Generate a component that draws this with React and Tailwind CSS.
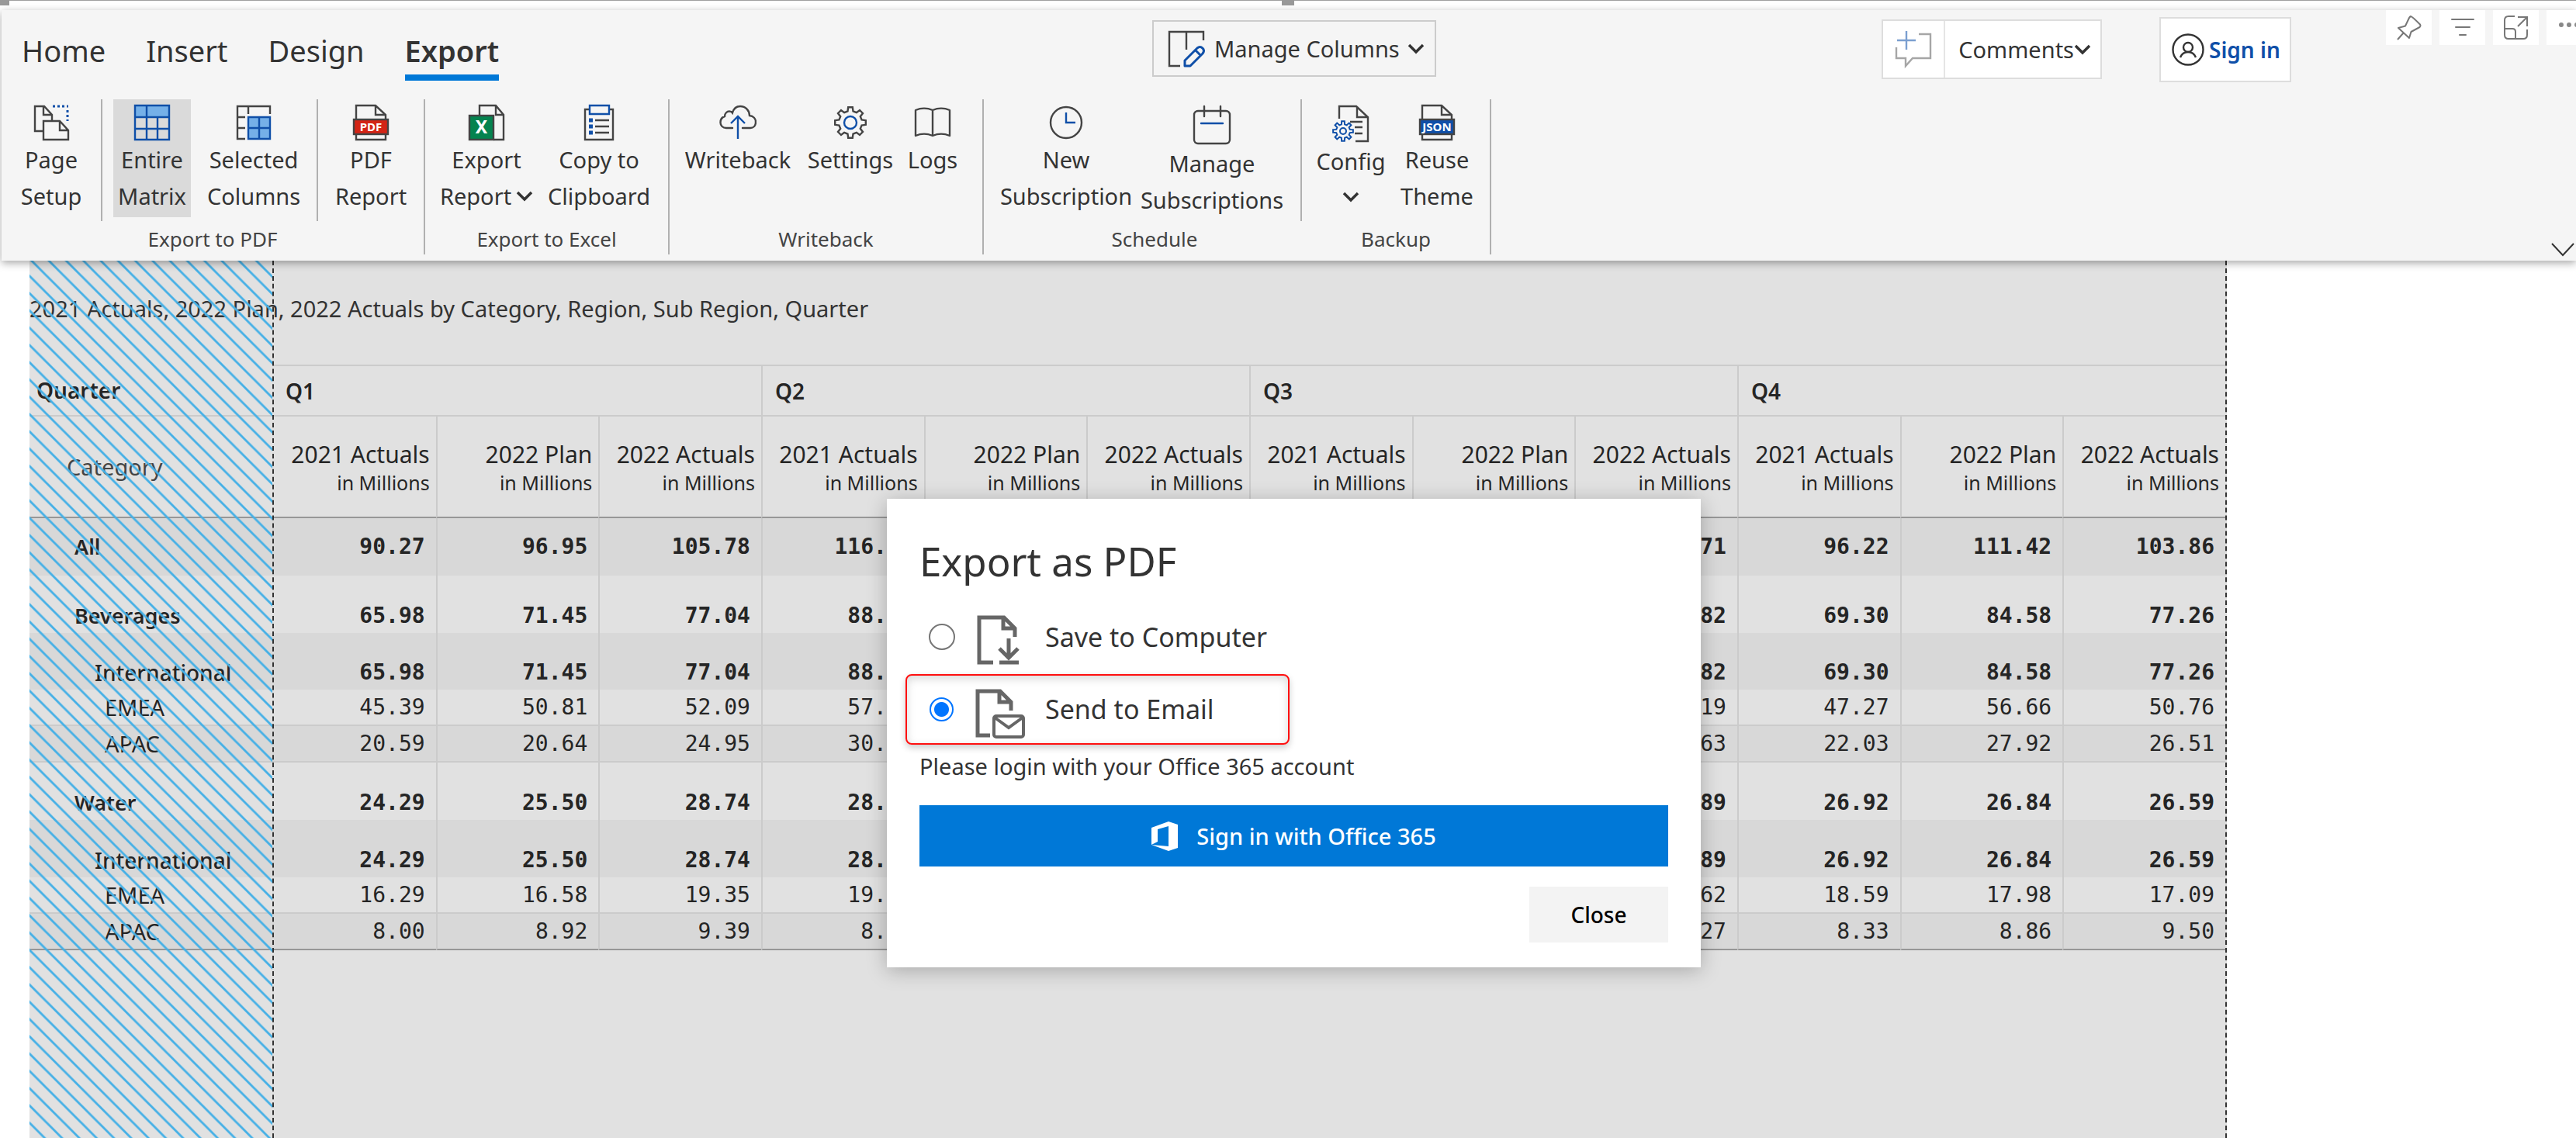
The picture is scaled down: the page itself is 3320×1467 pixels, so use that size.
import React from "react";

const INK = "#444444";
const BLUE = "#0f4fa8";
const SKY = "#75b0e8";

function gearPath(cx, cy, outer, inner, teeth) {
  const step = (Math.PI * 2) / teeth;
  const pts = [];
  for (let i = 0; i < teeth; i++) {
    const a = i * step - Math.PI / 2;
    [
      [inner, -0.3],
      [outer, -0.18],
      [outer, 0.18],
      [inner, 0.3],
    ].forEach(([r, k]) => {
      const t = a + k * step;
      pts.push((cx + r * Math.cos(t)).toFixed(2) + " " + (cy + r * Math.sin(t)).toFixed(2));
    });
  }
  return "M" + pts.join("L") + "Z";
}

function Svg({ w = 48, h = 48, children, className = "" }) {
  return (
    <svg
      width={w}
      height={h}
      viewBox={"0 0 " + w + " " + h}
      fill="none"
      stroke={INK}
      strokeWidth="2.4"
      className={"shrink-0 " + className}
      aria-hidden="true"
    >
      {children}
    </svg>
  );
}

const PageSetupIcon = () => (
  <Svg>
    <path d="M14 35H3V3H15L25 14V22M14 3V14H25" />
    <path d="M14 22V46H46V34L35 22ZM35 22V34H46" />
    <path d="M26 3H46" stroke={BLUE} strokeWidth="3" strokeDasharray="3 3" />
    <path d="M45 8V22" stroke={BLUE} strokeWidth="3" strokeDasharray="3 3" />
  </Svg>
);
const MatrixIcon = () => (
  <Svg>
    <path d="M2 2H46V17H2Z" fill={SKY} stroke="none" />
    <path d="M2 2H46V46H2ZM2 17H46M2 32H46M17 2V46M31 17V46" stroke={BLUE} />
  </Svg>
);
const SelectedIcon = () => (
  <Svg>
    <path d="M13 45H3V3H45V13M17 3V13M3 17H13M3 31H13" />
    <path d="M17 17H45V45H17ZM17 31H45M31 17V45" stroke={BLUE} fill={SKY} />
  </Svg>
);
function FileBadge({ label, fill, size }) {
  return (
    <Svg>
      <path d="M5 20V2H30L43 14V20M30 2V14H43M5 39V46H43V39" />
      <rect x="2" y="20" width="44" height="19" fill={fill} />
      <text
        x="24"
        y="35"
        textAnchor="middle"
        fontSize={size}
        fontWeight="700"
        fontFamily="Noto Sans, sans-serif"
        fill="#fff"
        stroke="none"
      >
        {label}
      </text>
    </Svg>
  );
}
const ExcelIcon = () => (
  <Svg>
    <path d="M15 14V2H36L46 14V46H33M36 2V14H46" />
    <rect x="2" y="15" width="31" height="31" fill="#04834f" />
    <text
      x="17.500"
      y="38"
      textAnchor="middle"
      fontSize="23"
      fontWeight="700"
      fontFamily="Noto Sans, sans-serif"
      fill="#fff"
      stroke="none"
    >
      X
    </text>
  </Svg>
);
const ClipboardIcon = () => (
  <Svg>
    <path d="M12 7H6V46H42V7H37" />
    <path d="M12 2H37V13H12Z" stroke={BLUE} />
    <path d="M11 21H16M11 29H16M11 37H16" stroke={BLUE} strokeWidth="5" />
    <path d="M19 21H37M19 29H37M19 37H37" />
  </Svg>
);
const CloudIcon = () => (
  <Svg>
    <path
      strokeLinecap="round"
      d="M17 31H9C4.500 31 1.500 28 1.500 24C1.500 20 4 17 7 16C7 12 10 9.500 13 9.500C14.500 9.500 16 10 17 11.500C18.500 6 22.500 3 27 3C34 3 39 8.500 39 15C44 15.500 47 19 47 23.500S44 31 40 31H30"
    />
    <path d="M24 45V16M15 25L24 16L33 25" stroke={BLUE} />
  </Svg>
);
const GearIcon = () => (
  <Svg>
    <path d={gearPath(24, 24, 20, 15, 8)} />
    <circle cx="24" cy="24" r="8" stroke={BLUE} />
  </Svg>
);
const BookIcon = () => (
  <Svg>
    <path
      strokeLinejoin="round"
      d="M2 8C9 5 17 5 24 8C31 5 39 5 46 8V41C39 38 31 38 24 41C17 38 9 38 2 41ZM24 8V41"
    />
  </Svg>
);
const ClockIcon = () => (
  <Svg>
    <circle cx="24" cy="24" r="20" />
    <path d="M24 11V24H36" stroke={BLUE} />
  </Svg>
);
const CalendarIcon = () => (
  <Svg w={50} h={53}>
    <rect x="2" y="9" width="46" height="42" rx="5" />
    <path d="M15 3V16M36 3V16" strokeLinecap="round" />
    <path d="M11 25H39" stroke={BLUE} strokeLinecap="round" />
  </Svg>
);
const ConfigIcon = () => (
  <Svg h={50}>
    <path d="M9 19V3H31L46 17V48H30M32 3V17H46M23 23H39M29 30H39M29 38H39" />
    <path d={gearPath(14, 35, 13, 9, 8)} stroke={BLUE} strokeWidth="2" />
    <circle cx="14" cy="35" r="4" stroke={BLUE} strokeWidth="2" />
  </Svg>
);
const ManageColumnsIcon = () => (
  <Svg>
    <path d="M16 46H2V2H46V13M24 2V25" />
    <path
      d="M22 46V39L38 23C43 19 49 25 45 30L29 46ZM36 26L42 32"
      stroke={BLUE}
      strokeWidth="3"
      strokeLinejoin="round"
    />
  </Svg>
);
const AddCommentIcon = () => (
  <Svg h={50}>
    <path d="M31 5H46V36H23L14 46V36H2V22" stroke="#a6a6a6" />
    <path d="M15 1V25M3 13H27" stroke="#7b9fd0" />
  </Svg>
);
const UserIcon = () => (
  <Svg w={42} h={42}>
    <circle cx="21" cy="21" r="19.500" stroke="#333" />
    <circle cx="21" cy="18" r="6" stroke="#333" />
    <path d="M11 31C13 26 17 24 21 24S29 26 31 31" stroke="#333" />
  </Svg>
);
const Chevron = ({ className = "" }) => (
  <svg width="22" height="14" viewBox="0 0 22 14" fill="none" stroke="#333" strokeWidth="3.500" className={"shrink-0 " + className} aria-hidden="true">
    <path d="M2 2L11 11L20 2" />
  </svg>
);

function Tool({ icon, lines, className, chevron }) {
  return (
    <button type="button" className={"flex h-[152px] shrink-0 flex-col items-center pt-1.5 " + className}>
      {icon}
      <span className="flex flex-col items-center">
        {lines.map((line, i) => (
          <span key={line} className="flex h-[47px] items-center whitespace-nowrap">
            {line}
            {chevron === "inline" && i === lines.length - 1 ? <Chevron className="ml-1.5" /> : null}
          </span>
        ))}
      </span>
      {chevron === "below" ? <Chevron className="mt-4" /> : null}
    </button>
  );
}

const Split = () => <div className="h-[157px] w-0.5 shrink-0 bg-[#b0b0b0]" />;

function Group({ label, children, end = true, className = "", labelClass = "" }) {
  return (
    <section className={"flex h-[200px] flex-col " + (end ? "border-r-2 border-[#b0b0b0] " : "") + className} aria-label={label}>
      <div className="flex h-[157px] shrink-0 items-start">{children}</div>
      <div className={"h-[43px] text-center text-[26px] leading-[46px] text-[#444] " + labelClass}>{label}</div>
    </section>
  );
}

function IconButton({ label, children, className = "w-[59px] justify-center" }) {
  return (
    <button type="button" aria-label={label} className={"flex h-[45px] shrink-0 items-center bg-white " + className}>
      {children}
    </button>
  );
}

function Ribbon() {
  return (
    <header className="relative z-20 ml-0.5 mt-3 flex flex-col bg-[#f5f5f5] text-[#333] shadow-[0_3px_10px_rgba(0,0,0,0.35)]">
      <div className="flex h-[115px] items-start">
        <nav className="flex flex-1 gap-[52px] pl-[26px] pt-[26px] text-[38px] leading-[52px]">
          {["Home", "Insert", "Design"].map((t) => (
            <a key={t} href="#" className="h-[65px]">
              {t}
            </a>
          ))}
          <a href="#" className="h-[65px] border-b-8 border-[#0078d7] font-semibold">
            Export
          </a>
        </nav>
        <button type="button" className="mr-3 mt-[13px] flex h-[73px] w-[366px] items-center border-2 border-[#ccc] pl-[18px] text-[29px]">
          <ManageColumnsIcon />
          <span className="ml-3 mr-2.5 whitespace-nowrap">Manage Columns</span>
          <Chevron />
        </button>
        <div className="flex flex-1 items-start justify-end text-[29px]">
          <div className="mr-[74px] mt-3 flex h-[77px] w-[284px] border-2 border-[#ddd] bg-white">
            <button type="button" aria-label="Add comment" className="flex w-[80px] items-center justify-center border-r-2 border-[#e5e5e5]">
              <AddCommentIcon />
            </button>
            <button type="button" className="flex flex-1 items-center justify-end pr-3">
              Comments
              <Chevron />
            </button>
          </div>
          <button
            type="button"
            className="mr-[122px] mt-[9px] flex h-[84px] w-[170px] items-center border-2 border-[#ddd] bg-white pl-3.5 font-semibold text-[#0f4fa8]"
          >
            <UserIcon />
            <span className="ml-1.5 whitespace-nowrap text-[28px]">Sign in</span>
          </button>
          <div className="flex w-[245px] shrink-0 gap-2.5 overflow-hidden">
            <IconButton label="Pin visual">
              <svg width="32" height="32" viewBox="0 0 32 32" fill="none" stroke="#777" strokeWidth="2" strokeLinejoin="round">
                <path d="M1 31L9 22M18 1C19 1 20 1.500 30 11.500C31 13 30.500 14 29.500 15L18.500 21L16 29L2 16L11 13.500L16 3C16.500 2 17 1.500 18 1Z" />
              </svg>
            </IconButton>
            <IconButton label="Filters">
              <svg width="30" height="32" viewBox="0 0 30 32" stroke="#777" strokeWidth="2" strokeLinecap="round">
                <path d="M1 5H29M6 15H24M11 25H19" />
              </svg>
            </IconButton>
            <IconButton label="Focus mode">
              <svg width="31" height="31" viewBox="0 0 31 31" fill="none" stroke="#777" strokeWidth="2">
                <path d="M14 1H6C3 1 1 3 1 6V25C1 28 3 30 6 30H25C28 30 30 28 30 25V18M18 2H30V14M30 2L18 14M1 17H11C13 17 15 18 15 21V30" />
              </svg>
            </IconButton>
            <IconButton label="More options" className="w-[59px] pl-4 pb-2">
              <svg width="28" height="6" viewBox="0 0 28 6" fill="#888">
                <circle cx="3" cy="3" r="3" />
                <circle cx="13" cy="3" r="3" />
                <circle cx="23" cy="3" r="3" />
              </svg>
            </IconButton>
          </div>
        </div>
      </div>

      <div className="flex h-[208px] items-start text-[29px]">
        <Group label="Export to PDF">
          <Tool className="w-[128px]" icon={<PageSetupIcon />} lines={["Page", "Setup"]} />
          <Split />
          <Tool className="ml-3.5 w-[100px] bg-[#dadada]" icon={<MatrixIcon />} lines={["Entire", "Matrix"]} />
          <Tool className="w-[162px]" icon={<SelectedIcon />} lines={["Selected", "Columns"]} />
          <Split />
          <Tool className="w-[136px]" icon={<FileBadge label="PDF" fill="#d32415" size="15" />} lines={["PDF", "Report"]} />
        </Group>
        <Group label="Export to Excel" className="w-[315px]">
          <Tool className="w-[158px]" icon={<ExcelIcon />} lines={["Export", "Report"]} chevron="inline" />
          <Tool className="w-[132px]" icon={<ClipboardIcon />} lines={["Copy to", "Clipboard"]} />
        </Group>
        <Group label="Writeback" className="w-[405px]">
          <Tool className="w-[176px]" icon={<CloudIcon />} lines={["Writeback"]} />
          <Tool className="w-[114px]" icon={<GearIcon />} lines={["Settings"]} />
          <Tool className="w-[98px]" icon={<BookIcon />} lines={["Logs"]} />
        </Group>
        <Group label="Schedule" end={false} className="px-4" labelClass="pl-8">
          <Tool className="w-[180px]" icon={<ClockIcon />} lines={["New", "Subscription"]} />
          <Tool className="w-[196px]" icon={<CalendarIcon />} lines={["Manage", "Subscriptions"]} />
        </Group>
        <Split />
        <Group label="Backup" className="w-[244px]">
          <Tool className="w-[126px]" icon={<ConfigIcon />} lines={["Config"]} chevron="below" />
          <Tool className="w-[96px]" icon={<FileBadge label="JSON" fill={BLUE} size="15" />} lines={["Reuse", "Theme"]} />
        </Group>
        <button type="button" aria-label="Collapse ribbon" className="ml-auto mr-0.5 mt-[185px]">
          <svg width="30" height="18" viewBox="0 0 30 18" fill="none" stroke="#333" strokeWidth="2" aria-hidden="true">
            <path d="M1 1L15 16L29 1" />
          </svg>
        </button>
      </div>
    </header>
  );
}

const QUARTERS = ["Q1", "Q2", "Q3", "Q4"];
const MEASURES = ["2021 Actuals", "2022 Plan", "2022 Actuals"];

/* Columns fully covered by the dialog carry no value. */
const ROWS = [
  { name: "All", pad: "pl-[58px]", tone: "bold", h: "h-[74px]", align: "align-middle", dark: true,
    v: ["90.27", "96.95", "105.78", "116.42", "", "", "", "", "101.71", "96.22", "111.42", "103.86"] },
  { name: "Beverages", pad: "pl-[58px]", tone: "bold", h: "h-[74px]", align: "align-bottom",
    v: ["65.98", "71.45", "77.04", "88.10", "", "", "", "", "74.82", "69.30", "84.58", "77.26"] },
  { name: "International", pad: "pl-[84px]", tone: "medium", h: "h-[73px]", align: "align-bottom", dark: true,
    v: ["65.98", "71.45", "77.04", "88.10", "", "", "", "", "74.82", "69.30", "84.58", "77.26"] },
  { name: "EMEA", pad: "pl-[97px]", h: "h-[47px]", align: "align-bottom", line: "thin",
    v: ["45.39", "50.81", "52.09", "57.80", "", "", "", "", "48.19", "47.27", "56.66", "50.76"] },
  { name: "APAC", pad: "pl-[97px]", h: "h-[47px]", align: "align-bottom", dark: true, line: "thin",
    v: ["20.59", "20.64", "24.95", "30.30", "", "", "", "", "26.63", "22.03", "27.92", "26.51"] },
  { name: "Water", pad: "pl-[58px]", tone: "bold", h: "h-[74px]", align: "align-bottom",
    v: ["24.29", "25.50", "28.74", "28.32", "", "", "", "", "26.89", "26.92", "26.84", "26.59"] },
  { name: "International", pad: "pl-[84px]", tone: "medium", h: "h-[74px]", align: "align-bottom", dark: true,
    v: ["24.29", "25.50", "28.74", "28.32", "", "", "", "", "26.89", "26.92", "26.84", "26.59"] },
  { name: "EMEA", pad: "pl-[97px]", h: "h-[47px]", align: "align-bottom", line: "thin",
    v: ["16.29", "16.58", "19.35", "19.40", "", "", "", "", "17.62", "18.59", "17.98", "17.09"] },
  { name: "APAC", pad: "pl-[97px]", h: "h-[47px]", align: "align-bottom", dark: true, line: "thick",
    v: ["8.00", "8.92", "9.39", "8.92", "", "", "", "", "9.27", "8.33", "8.86", "9.50"] },
];

const LINE = {
  thin: "border-b-2 border-b-[#cbcbcb]",
  thick: "border-b-2 border-b-[#979797]",
};

const LABEL_TONE = {
  bold: "text-[27px] font-semibold",
  medium: "text-[28px] font-medium",
};

function Matrix() {
  return (
    <table className="w-full table-fixed border-separate border-spacing-0 text-[#252525]">
      <colgroup>
        <col className="w-[314px]" />
        {QUARTERS.flatMap((q) => MEASURES.map((m) => <col key={q + m} />))}
      </colgroup>
      <thead>
        <tr className="h-[67px] text-left text-[28px] leading-[44px]">
          <th scope="row" className="border-b-2 border-[#cbcbcb] pl-[9px] font-semibold">
            Quarter
          </th>
          {QUARTERS.map((q, i) => (
            <th
              key={q}
              colSpan={3}
              scope="colgroup"
              className={"border-y-2 border-[#cbcbcb] pl-4 font-semibold " + (i ? "border-l-2" : "")}
            >
              {q}
            </th>
          ))}
        </tr>
        <tr className="h-[131px] text-[30px] font-normal leading-[40px]">
          <th scope="col" className="border-b-2 border-[#979797] pl-12 text-left text-[29px] font-normal text-[#444]">
            Category
          </th>
          {QUARTERS.flatMap((q, i) =>
            MEASURES.map((m, j) => (
              <th
                key={q + m}
                scope="col"
                className={
                  "whitespace-nowrap border-b-2 border-b-[#979797] pr-2 text-right font-normal " +
                  (i + j ? "border-l-2 border-l-[#cbcbcb]" : "")
                }
              >
                {m}
                <span className="block text-[25px] leading-[32px]">in Millions</span>
              </th>
            ))
          )}
        </tr>
      </thead>
      <tbody>
        {ROWS.map((r, i) => {
          const weight = r.tone ? "font-bold " : "font-normal ";
          const edge = r.line ? LINE[r.line] : "";
          return (
            <tr key={i} className={r.h + " leading-[44px] " + (r.dark ? "bg-[#d8d8d8]" : "")}>
              <th
                scope="row"
                className={
                  "text-left " + r.pad + " " + r.align + " " + edge + " " +
                  (LABEL_TONE[r.tone] || "text-[29px] font-normal")
                }
              >
                {r.name}
              </th>
              {r.v.map((v, c) => (
                <td
                  key={c}
                  className={
                    "pr-3.5 text-right font-['DejaVu_Sans_Mono',monospace] text-[28px] " +
                    weight + r.align + " " + edge + (c ? " border-l-2 border-l-[#cbcbcb]" : "")
                  }
                >
                  {v}
                </td>
              ))}
            </tr>
          );
        })}
      </tbody>
    </table>
  );
}

function ExportDialog() {
  return (
    <div
      role="dialog"
      aria-labelledby="export-title"
      className="absolute left-1/2 top-[307px] z-30 -ml-[517px] w-[1049px] bg-white px-[42px] pb-8 text-[#333] shadow-[0_4px_24px_rgba(0,0,0,0.25)]"
    >
      <h2 id="export-title" className="pt-[46px] text-[51px] leading-[68px]">
        Export as PDF
      </h2>
      <div className="mt-5 flex flex-col text-[34px]">
        <label className="flex h-[88px] items-center pl-3">
          <input type="radio" name="target" className="size-[34px] shrink-0 appearance-none rounded-full border-2 border-[#767676] bg-white" />
          <span className="ml-7 flex w-16 justify-start pt-2">
            <svg width="56" height="64" viewBox="0 0 56 64" fill="none" stroke="#666" strokeWidth="5" aria-hidden="true">
              <path d="M21 61H3V3H35L49 17V28M34 3V17H49" />
              <path d="M41 30V54M29 43L41 55L53 43M29 61H54" />
            </svg>
          </span>
          <span className="ml-6">Save to Computer</span>
        </label>
        <label className="-ml-[18px] mt-1 flex h-[91px] w-[495px] items-center rounded-lg border-2 border-[#ff1010] pl-[29px] shadow-[0_4px_8px_rgba(0,0,0,0.2),inset_0_4px_12px_rgba(0,0,0,0.15)]">
          <input
            type="radio"
            name="target"
            defaultChecked
            className="size-[31px] shrink-0 appearance-none rounded-full border-2 border-[#0075ff] bg-[radial-gradient(circle,#0075ff_9px,#fff_10px)]"
          />
          <span className="ml-7 flex w-16 pt-2.5">
            <svg width="64" height="64" viewBox="0 0 64 64" fill="none" stroke="#666" strokeWidth="5" aria-hidden="true">
              <path d="M19 60H3V3H32L46 17V28M31 3V17H46" />
              <rect x="24" y="35" width="38" height="27" rx="3" strokeWidth="4" />
              <path d="M25 37L43 50L61 37" strokeWidth="4" />
            </svg>
          </span>
          <span className="ml-[26px]">Send to Email</span>
        </label>
      </div>
      <p className="mt-1.5 text-[29px] leading-[44px]">Please login with your Office 365 account</p>
      <button type="button" className="mt-7 flex h-[79px] w-full items-center justify-center gap-6 bg-[#0078d7] text-[29px] font-medium text-white">
        <svg width="34" height="38" viewBox="0 0 34 38" aria-hidden="true">
          <path fill="#fff" fillRule="evenodd" d="M0 8L22 0L34 4V34L22 38L0 30L22 32V6L8 10V26L0 30Z" />
        </svg>
        Sign in with Office 365
      </button>
      <button type="button" className="ml-auto mt-[26px] flex h-[72px] w-[179px] items-center justify-center bg-[#f3f3f3] text-[28px] font-medium text-black">
        Close
      </button>
    </div>
  );
}

export default function App() {
  return (
    <div className="flex min-h-screen flex-col overflow-hidden bg-white font-['Noto_Sans',sans-serif]">
      <div className="relative h-px bg-[#a0a0a0]">
        <span className="absolute left-0 top-0 h-[7px] w-3 bg-[#999]" />
        <span className="absolute left-1/2 top-0 -ml-2 h-[7px] w-4 bg-[#999]" />
      </div>
      <Ribbon />
      <main className="relative flex flex-1">
        <div className="relative ml-[38px] mr-[450px] flex-1 border-r-2 border-dashed border-[#333] bg-[#e1e1e1]">
          <h1 className="h-[134px] whitespace-nowrap pt-10 text-[29px] leading-[44px] text-[#333]">
            2021 Actuals, 2022 Plan, 2022 Actuals by Category, Region, Sub Region, Quarter
          </h1>
          <Matrix />
          <div className="absolute inset-y-0 left-0 w-[315px] border-r-2 border-dashed border-[#333]">
            <svg width="100%" height="100%" className="absolute inset-0" aria-hidden="true">
              <defs>
                <pattern id="hatch" x="0" y="-2.600" width="22.280" height="22.280" patternUnits="userSpaceOnUse">
                  <path d="M-3 -3L26 26M-3 19.280L3 25.280M19.280 -3L25.280 3" stroke="#45b0e6" strokeWidth="2.800" />
                </pattern>
              </defs>
              <rect width="100%" height="100%" fill="url(#hatch)" />
            </svg>
          </div>
        </div>
        <ExportDialog />
      </main>
    </div>
  );
}
